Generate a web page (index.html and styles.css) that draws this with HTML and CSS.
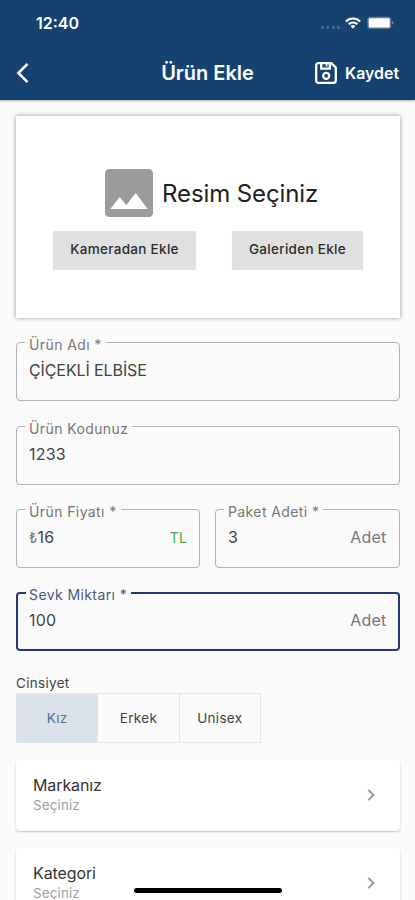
FILE: index.html
```html
<!DOCTYPE html>
<html lang="tr">
<head>
<meta charset="utf-8">
<meta name="viewport" content="width=device-width, initial-scale=1">
<title>Ürün Ekle</title>
<link rel="stylesheet" href="styles.css">
</head>
<body>
<header class="header">
  <div class="status">
    <span class="clock">12:40</span>
    <div class="status-icons">
      <span class="signal"><i></i><i></i><i></i><i></i></span>
      <svg class="wifi" width="16" height="12" viewBox="0 0 16 12" fill="none" stroke="#fff" stroke-width="2.1"><path d="M.9 4.4a10.2 10.2 0 0 1 14.2 0"/><path d="M3.6 7.3a6.2 6.2 0 0 1 8.8 0"/><path d="M5.5 9.1a3.6 3.6 0 0 1 5 0L8 11.8z" fill="#fff" stroke="none"/></svg>
      <svg class="battery" width="28" height="14" viewBox="0 0 28 14"><rect x=".3" y=".8" width="24" height="12" rx="3" fill="#5f7a9f"/><rect x="1.8" y="2.2" width="21" height="9.2" rx="1.2" fill="#fff"/><path d="M25.300 4.800c1.600.600 1.600 3.400 0 4z" fill="#8c9fba"/></svg>
    </div>
  </div>
  <div class="appbar">
    <svg class="back" width="14" height="22" viewBox="0 0 14 22" fill="none" stroke="#fff" stroke-width="2.6"><path d="M11.5 1.8 2.4 11l9.1 9.2"/></svg>
    <h1 class="title">Ürün Ekle</h1>
    <div class="save">
      <svg width="22" height="22" viewBox="0 0 22 22" fill="none" stroke="#fff" stroke-width="2.3"><path d="M3.2 1.2h13.2l4.4 4.4v13a2.2 2.2 0 0 1-2.2 2.2H3.2a2 2 0 0 1-2-2V3.2a2 2 0 0 1 2-2z"/><path d="M6.2 1.5v5.1h8.6V1.5"/><path d="M11.6 2v2.6" stroke-width="1.6"/><circle cx="11.2" cy="13.8" r="3"/></svg>
      <span>Kaydet</span>
    </div>
  </div>
</header>

<main class="content">
  <section class="picker">
    <div class="picker-head">
      <svg width="48" height="48" viewBox="3 3 18 18"><path fill="#9b9b9b" d="M21 19.4V4.6A1.6 1.6 0 0 0 19.4 3H4.6A1.6 1.6 0 0 0 3 4.6v14.8A1.6 1.6 0 0 0 4.6 21h14.8a1.6 1.6 0 0 0 1.6-1.6z"/><path fill="#fff" d="m8.5 13.5 2.5 3.01L14.5 12l4.5 6H5z"/></svg>
      <span>Resim Seçiniz</span>
    </div>
    <div class="picker-actions">
      <button class="btn btn-camera">Kameradan Ekle</button>
      <button class="btn btn-gallery">Galeriden Ekle</button>
    </div>
  </section>

  <form class="form">
    <fieldset class="field"><legend>Ürün Adı *</legend><div class="value"><span class="upper">ÇİÇEKLİ ELBİSE</span></div></fieldset>
    <fieldset class="field"><legend>Ürün Kodunuz</legend><div class="value"><span>1233</span></div></fieldset>
    <div class="row">
      <fieldset class="field"><legend>Ürün Fiyatı *</legend><div class="value"><span><span class="lira">₺</span>16</span><span class="currency">TL</span></div></fieldset>
      <fieldset class="field"><legend>Paket Adeti *</legend><div class="value"><span>3</span><span class="unit">Adet</span></div></fieldset>
    </div>
    <fieldset class="field focused"><legend>Sevk Miktarı *</legend><div class="value"><span>100</span><span class="unit">Adet</span></div></fieldset>
  </form>

  <div class="gender-label">Cinsiyet</div>
  <div class="segments">
    <span class="segment active">Kız</span><span class="segment">Erkek</span><span class="segment">Unisex</span>
  </div>

  <div class="tile">
    <div><div class="tile-title">Markanız</div><div class="tile-sub">Seçiniz</div></div>
    <svg width="9" height="14" viewBox="0 0 9 14" fill="none" stroke="#969696" stroke-width="1.9"><path d="m1.3 1.8 5.2 5.2-5.2 5.2"/></svg>
  </div>
  <div class="tile">
    <div><div class="tile-title">Kategori</div><div class="tile-sub">Seçiniz</div></div>
    <svg width="9" height="14" viewBox="0 0 9 14" fill="none" stroke="#969696" stroke-width="1.9"><path d="m1.3 1.8 5.2 5.2-5.2 5.2"/></svg>
  </div>
</main>
<div class="home-indicator"></div>
</body>
</html>
```
FILE: styles.css
```css
* { box-sizing: border-box; }
html, body { height: 900px; overflow: hidden; }
body {
  margin: 0;
  background: #fafafa;
  color: #333;
  font-family: Inter, "Liberation Sans", sans-serif;
}
.header { height: 100px; background: #164272; color: #fff; box-shadow: 0 1px 2px rgba(0,0,0,.3); }
.status { height: 46px; padding: 0 23px 0 36px; display: flex; justify-content: space-between; align-items: center; }
.clock { font-size: 16px; font-weight: 600; line-height: 20px; }
.status-icons { display: flex; align-items: center; }
.signal { display: flex; gap: 2.5px; margin: 8px 5px 0 0; }
.signal i { width: 3px; height: 3px; border-radius: 1px; background: #486690; }
.wifi { margin-right: 6px; }
.battery { margin-right: -3px; }
.appbar { height: 54px; padding: 0 16px; display: grid; grid-template-columns: 1fr auto 1fr; align-items: center; }
.back { display: block; }
.title { margin: 0; font-size: 20px; font-weight: 600; line-height: 24px; }
.save { display: flex; align-items: center; justify-content: flex-end; gap: 8px; font-size: 15.9px; font-weight: 600; }

.content { padding: 16px 15.5px 0 16px; }
.picker { height: 202px; padding-top: 53px; background: #fff; box-shadow: 0 0 4px rgba(0,0,0,.42); }
.picker-head { display: flex; align-items: center; gap: 9px; padding-left: 89px; height: 48px; font-size: 24px; letter-spacing: -.1px; color: #222; white-space: nowrap; }
.picker-actions { display: flex; gap: 36px; margin: 14px 0 0 37px; }
.btn { height: 39px; padding: 0 0 3px; border: 0; border-radius: 2px; background: #e0e0e0; color: #2b2b2b; font: 500 13.5px Inter, sans-serif; letter-spacing: .3px; box-shadow: 0 0 1px rgba(0,0,0,.12); }
.btn-camera { width: 143px; }
.btn-gallery { width: 131px; }

.form { display: flex; flex-direction: column; gap: 15.3px; margin-top: 15.4px; }
.row { display: grid; grid-template-columns: 184px 1fr; gap: 15px; }
.field { height: 68px; min-width: 0; margin: 0; padding: 0 12px 0 8px; border: 1px solid #b3b3b3; border-radius: 4px; }
.field legend { height: 19px; padding: 5px 4px 0; font-size: 14px; line-height: 14px; letter-spacing: .4px; color: #777; white-space: nowrap; }
.value { display: flex; justify-content: space-between; padding-left: 4px; margin-top: 8px; font-size: 16px; line-height: 20px; letter-spacing: .2px; color: #444; }
.upper { letter-spacing: -.1px; }
.unit { color: #777; }
.lira { font-size: 14px; color: #777; }
.currency { color: #48aa4c; font-size: 14px; line-height: 22px; }
.focused { border: 2px solid #253a70; }
.focused legend { color: #4a5888; padding-left: 3px; }
.focused .value { padding-left: 3px; padding-right: 0; margin-right: -1px; }

.gender-label { margin-top: 23px; height: 18.5px; font-size: 13.5px; line-height: 18px; color: #444; letter-spacing: .3px; }
.segments { display: flex; width: 245px; height: 50px; border: 1px solid #e4e5e7; }
.segment { flex: 1; display: flex; align-items: center; justify-content: center; font-size: 13.5px; letter-spacing: .3px; color: #444; }
.segment + .segment { border-left: 1px solid #e4e5e7; }
.active { background: #dce2e9; color: #526c98; }

.tile { height: 71px; margin-top: 17px; padding: 0 24px 1px 17px; display: flex; justify-content: space-between; align-items: center; background: #fff; border-radius: 4px; box-shadow: 0 1px 2px rgba(0,0,0,.22); }
.tile-title { font-size: 16px; line-height: 20px; color: #333; letter-spacing: -.1px; }
.tile-sub { font-size: 13.5px; line-height: 20px; color: #a0a0a0; letter-spacing: .1px; }
.home-indicator { position: absolute; left: 134px; top: 887.5px; width: 148px; height: 5px; border-radius: 3px; background: #000; }
```
